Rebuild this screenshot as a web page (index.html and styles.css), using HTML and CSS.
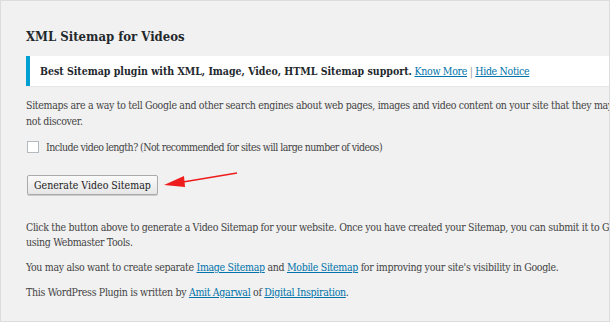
FILE: index.html
```html
<!DOCTYPE html>
<html lang="en">
<head>
  <meta charset="UTF-8" />
  <title>XML Sitemap for Videos</title>
  <link rel="stylesheet" href="styles.css">
</head>
<body>
  <div class="frame">
    <div class="wrap">
      <h2>XML Sitemap for Videos</h2>

      <div class="notice">
        <strong>Best Sitemap plugin with XML, Image, Video, HTML Sitemap support.</strong>
        <a href="#">Know More</a> <span class="sep">|</span> <a href="#">Hide Notice</a>
      </div>

      <p class="intro">Sitemaps are a way to tell Google and other search engines about web pages, images and video content on your site that they may not discover.</p>

      <label class="check">
        <input type="checkbox">
        Include video length? (Not recommended for sites will large number of videos)
      </label>

      <div class="actions">
        <button type="button" class="button">Generate Video Sitemap</button>
        <svg class="arrow" width="80" height="20" viewBox="0 0 80 20">
          <line x1="77" y1="2" x2="20" y2="11.5" stroke="#ee1c1c" stroke-width="1.6" />
          <polygon points="4,14 24,5 25,16" fill="#ee1c1c" />
        </svg>
      </div>

      <p>Click the button above to generate a Video Sitemap for your website. Once you have created your Sitemap, you can submit it to Google using Webmaster Tools.</p>
      <p>You may also want to create separate <a href="#">Image Sitemap</a> and <a href="#">Mobile Sitemap</a> for improving your site's visibility in Google.</p>
      <p>This WordPress Plugin is written by <a href="#">Amit Agarwal</a> of <a href="#">Digital Inspiration</a>.</p>
    </div>
  </div>
</body>
</html>
```

FILE: styles.css
```css
* {
  margin: 0;
  padding: 0;
  box-sizing: border-box;
}

body {
  width: 610px;
  height: 322px;
  overflow: hidden;
  background: #f1f1f1;
  font-family: 'DejaVu Serif Condensed', 'DejaVu Serif', serif;
  font-stretch: condensed;
  font-size: 10.5px;
  letter-spacing: -0.32px;
  color: #444;
}

.frame {
  height: 322px;
  border: 1px solid #dcdcdc;
  overflow: hidden;
}

.wrap {
  width: 650px;
  padding: 28px 0 0 25px;
}

h2 {
  font-size: 13px;
  font-weight: bold;
  letter-spacing: 0;
  color: #23282d;
  margin-bottom: 12px;
}

.notice {
  background: #fff;
  border-left: 4px solid #00a0d2;
  box-shadow: 0 1px 1px rgba(0, 0, 0, 0.04);
  padding: 7px 10px;
  line-height: 16px;
  margin-bottom: 11px;
}

.notice strong {
  color: #23282d;
  letter-spacing: 0;
}

.sep {
  color: #999;
}

a {
  color: #0073aa;
}

p {
  line-height: 15px;
  margin-bottom: 10px;
}

.intro {
  width: 592px;
  line-height: 16px;
}

.check {
  display: flex;
  align-items: center;
  gap: 7px;
  margin: 5px 0 0 1px;
  line-height: 16px;
  letter-spacing: -0.55px;
}

.check input {
  appearance: none;
  width: 12px;
  height: 12px;
  background: #fff;
  border: 1px solid #b4b9be;
}

.actions {
  display: flex;
  align-items: center;
  margin: 20px 0 25px 1px;
}

.button {
  font-family: inherit;
  font-stretch: condensed;
  font-size: 10.5px;
  letter-spacing: 0;
  color: #222;
  height: 20px;
  padding: 0 6px;
  background: linear-gradient(#fafafa, #e6e6e6);
  border: 1px solid #aaa;
  border-radius: 2px;
  box-shadow: 0 1px 0 #ccc;
}

.arrow {
  margin: -8px 0 0 2px;
}
```
